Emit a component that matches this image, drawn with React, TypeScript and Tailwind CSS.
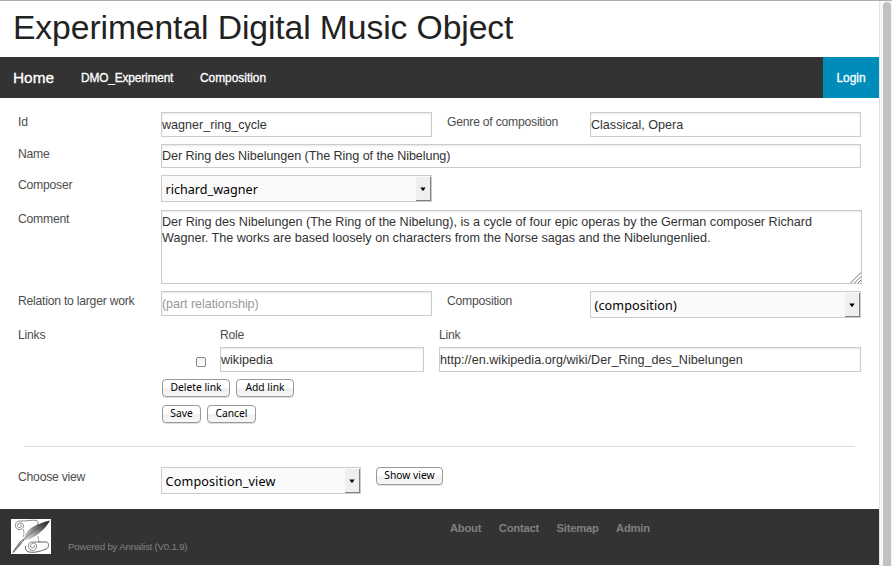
import type { ReactNode } from 'react';

const FIELD =
  'block border border-[#ccc] bg-white text-[12.6px] tracking-[-0.01px] text-[#333] placeholder:text-[#999] shadow-[inset_0_1px_2px_rgba(0,0,0,0.1)] outline-none';

function Label({ children, className = 'w-[143px]' }: { children: ReactNode; className?: string }) {
  return (
    <label
      className={`block shrink-0 text-[12.2px] leading-[20px] tracking-[-0.24px] whitespace-nowrap text-[#4d4d4d] ${className}`}
    >
      {children}
    </label>
  );
}

function TextField({ value, placeholder, className }: { value?: string; placeholder?: string; className: string }) {
  return <input type="text" defaultValue={value} placeholder={placeholder} className={`${FIELD} shrink-0 ${className}`} />;
}

function SelectField({ value, className }: { value: string; className: string }) {
  return (
    <div
      className={`flex h-[27px] shrink-0 border border-[#ccc] bg-[#fafafa] font-['Noto_Sans','Open_Sans',sans-serif] text-[12.6px] text-black ${className}`}
    >
      <span className="grow pt-px pl-[3.5px] leading-[25px] whitespace-nowrap">{value}</span>
      <span className="mt-px flex w-[15px] items-center justify-center border-r border-b border-[#808080] bg-[#efefef]">
        <svg width="6" height="4" viewBox="0 0 6 4">
          <path d="M0.3 0.5h5.4L3.4 3.7h-.8z" fill="#000" />
        </svg>
      </span>
    </div>
  );
}

function Button({ children, className }: { children: ReactNode; className: string }) {
  return (
    <button
      type="button"
      className={`flex h-[18px] shrink-0 items-center justify-center rounded-[4px] border border-[#999] bg-linear-to-b from-white from-50% via-[#efefef] via-55% to-[#f8f8f8] pb-px font-['Noto_Sans','Open_Sans',sans-serif] text-[10.3px] leading-none whitespace-nowrap text-black shadow-[0_1px_0_rgba(0,0,0,0.12)] ${className}`}
    >
      {children}
    </button>
  );
}

function ScrollLogo() {
  return (
    <svg width="40" height="35" viewBox="0 0 40 35" className="bg-white">
      <defs>
        <linearGradient id="feather" x1="0" y1="1" x2="1" y2="0">
          <stop offset="0" stopColor="#e4e4e4" />
          <stop offset="0.4" stopColor="#999" />
          <stop offset="0.75" stopColor="#444" />
          <stop offset="1" stopColor="#111" />
        </linearGradient>
      </defs>
      <g fill="none" stroke="#777" strokeWidth="0.9">
        <path d="M9 2C3 2 3 10 8 10.500c5 .5 6-6 2-6.500-4-.5-5 4.500-1.500 4.500 2 0 2.500-2.500 .5-3" />
        <path d="M9 2c6 .5 11-1.500 17-.5 2 1 .5 4 .5 6" />
        <path d="M12 10c1.500 3 1 5 0 8M27 17c0 2 .5 4 .5 6" stroke="#999" />
        <path d="M27.500 23h8c3 1 2.500 6-.5 7-5 2-10 4-17 3-3-.5-4-3-3.500-6" stroke="#555" />
        <path d="M21 23c-5 0-5 8 .5 8.500 5 0 5.500-7.500 1-7.500-3.500 0-4 5-1 5 2 0 2.500-2 1.500-3M21 23h8" stroke="#777" />
      </g>
      <path d="M39 1.500c-7 1.500-13 4-18 7-5 3.500-8 8-8.500 13 6-1 12-3.500 17-8.500 4-3 7-7 9.500-11.500z" fill="url(#feather)" />
      <path d="M37 3C27 9 17 15 12 22" fill="none" stroke="#555" strokeWidth="0.7" />
      <path d="M13 20L9 23 2 33" fill="none" stroke="#555" strokeWidth="1" />
      <path d="M13 21l-4 3-6.500 8.500L1 34l2-.5L10.500 25z" fill="#888" />
    </svg>
  );
}

export default function App() {
  return (
    <div className="flex h-[566px] w-[892px] flex-col overflow-hidden border-t border-[#adadad] bg-white font-['Liberation_Sans',Arial,sans-serif]">
      <div className="flex h-[565px]">
        <div className="w-[879px] shrink-0">
          <h1 className="h-[56px] pt-[5px] pl-[13px] text-[33.7px] leading-[42px] tracking-[-0.1px] whitespace-nowrap text-[#222]">
            Experimental Digital Music Object
          </h1>

          <nav className="flex h-[41px] items-center bg-[#333] pl-[13px] text-[11.9px] whitespace-nowrap text-white [-webkit-text-stroke:0.3px_white]">
            <a className="w-[68px] text-[15.4px]">Home</a>
            <a className="w-[119px] pt-[3px] tracking-[-0.16px]">DMO_Experiment</a>
            <a className="pt-[3px]">Composition</a>
            <a className="ml-auto flex h-full w-[56px] items-center justify-center bg-[#008cba] pt-[3px]">Login</a>
          </nav>

          <main className="h-[411px] pt-[14px] pl-[18px]">
            <div className="flex h-[32px]">
              <Label>Id</Label>
              <TextField value="wagner_ring_cycle" className="h-[25px] w-[271px]" />
              <Label className="ml-[15px] w-[143px]">Genre of composition</Label>
              <TextField value="Classical, Opera" className="h-[25px] w-[271px]" />
            </div>
            <div className="flex h-[31px]">
              <Label>Name</Label>
              <TextField
                value="Der Ring des Nibelungen (The Ring of the Nibelung)"
                className="h-[24px] w-[700px] tracking-[-0.07px]"
              />
            </div>
            <div className="flex h-[35px]">
              <Label>Composer</Label>
              <SelectField value="richard_wagner" className="w-[271px]" />
            </div>
            <div className="flex h-[81px]">
              <Label className="-mt-px w-[143px]">Comment</Label>
              <div className="relative h-[74px] w-[701px]">
                <textarea
                  className={`${FIELD} h-full w-full resize-none overflow-hidden pt-[3px] leading-[16px]`}
                  defaultValue={
                    'Der Ring des Nibelungen (The Ring of the Nibelung), is a cycle of four epic operas by the German composer Richard\nWagner. The works are based loosely on characters from the Norse sagas and the Nibelungenlied.'
                  }
                />
                <svg width="11" height="11" viewBox="0 0 11 11" className="absolute right-px bottom-px">
                  <path d="M0.5 11L11 0.5M4.5 11L11 4.5M8 11l3-3" stroke="#777" strokeWidth="1" />
                </svg>
              </div>
            </div>
            <div className="flex h-[34px]">
              <Label>Relation to larger work</Label>
              <TextField placeholder="(part relationship)" className="h-[25px] w-[271px] tracking-[-0.07px]" />
              <Label className="ml-[15px] w-[143px]">Composition</Label>
              <SelectField value="(composition)" className="w-[271px] tracking-[0.12px]" />
            </div>
            <div className="flex h-[22px]">
              <Label className="w-[202px]">Links</Label>
              <Label className="w-[219px]">Role</Label>
              <Label>Link</Label>
            </div>
            <div className="flex h-[32px] pl-[178px]">
              <input
                type="checkbox"
                className="mt-[10px] mr-[14px] block size-[10px] appearance-none rounded-[2px] border border-[#888] bg-linear-to-b from-[#f0f0f0] to-white"
              />
              <TextField value="wikipedia" className="mr-[15px] h-[25px] w-[204px]" />
              <TextField
                value="http://en.wikipedia.org/wiki/Der_Ring_des_Nibelungen"
                className="h-[25px] w-[422px] tracking-[0.02px]"
              />
            </div>
            <div className="flex h-[26px] gap-[6px] pl-[144px]">
              <Button className="w-[68px]">Delete link</Button>
              <Button className="w-[58px]">Add link</Button>
            </div>
            <div className="flex h-[41px] gap-[6px] pl-[144px]">
              <Button className="w-[39px]">Save</Button>
              <Button className="w-[49px]">Cancel</Button>
            </div>
            <hr className="mr-[24px] mb-[20px] ml-[6px] border-[#ddd]" />
            <div className="flex h-[42px]">
              <Label>Choose view</Label>
              <SelectField value="Composition_view" className="mr-[15px] w-[200px] tracking-[0.18px]" />
              <Button className="w-[67px]">Show view</Button>
            </div>
          </main>

          <footer className="flex h-[56px] bg-[#333] pt-[10px] pl-[11px] whitespace-nowrap text-[#808080]">
            <ScrollLogo />
            <p className="mt-[22px] ml-[17px] w-[382px] text-[9.8px] leading-[12px] tracking-[-0.25px]">
              Powered by Annalist (V0.1.9)
            </p>
            <nav className="flex gap-[17.6px] text-[11.2px] leading-[18px] font-bold tracking-[-0.22px]">
              <a>About</a>
              <a>Contact</a>
              <a>Sitemap</a>
              <a>Admin</a>
            </nav>
          </footer>
        </div>

        <div className="flex w-[13px] border-l border-[#e3e3e3] bg-[#f7f7f7] pt-px pl-[3px]">
          <div className="h-[575px] w-[8px] rounded-t-full bg-[#c1c1c1]" />
        </div>
      </div>
    </div>
  );
}
